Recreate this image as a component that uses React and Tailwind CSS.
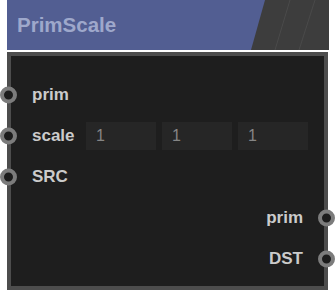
const Port = ({ side }) => (
  <span
    className={`absolute top-1/2 -translate-y-1/2 w-[17px] h-[17px] rounded-full bg-[#1c1c1c] border-[4px] border-[#7c7c7c] ${
      side === 'left' ? 'left-[-11px]' : 'right-[-11px]'
    }`}
  />
);

const Row = ({ children, side = 'left' }) => (
  <div className={`relative h-[41px] flex items-center ${side === 'right' ? 'justify-end pr-[21px]' : 'pl-[21px]'}`}>
    <Port side={side} />
    {children}
  </div>
);

const NumBox = ({ value }) => (
  <div className="w-[70px] h-[28px] bg-[#262626] flex items-center pl-[10px] text-[16px] font-normal text-[#858585]">
    {value}
  </div>
);

export default function App() {
  return (
    <div className="w-[336px] h-[294px] bg-white pl-[7px]" style={{ fontFamily: '"Liberation Sans", Arial, sans-serif' }}>
      <div className="relative w-[322px] h-[50px] bg-[#3d3d3d] overflow-hidden">
        <svg className="absolute inset-0" width="322" height="50" viewBox="0 0 322 50">
          <polygon points="0,0 258,0 244,50 0,50" fill="#525e92" />
          <line x1="268" y1="50" x2="283" y2="0" stroke="#4a4a4a" strokeWidth="1" />
          <line x1="292" y1="50" x2="308" y2="0" stroke="#4a4a4a" strokeWidth="1" />
        </svg>
        <div className="relative h-full flex items-center pl-[10px] text-[20.5px] font-bold text-[#9ea8cb]">
          PrimScale
        </div>
      </div>
      <div className="mt-[2px] w-[321px] h-[238px] border-[4px] border-[#4d4d4d] bg-[#1e1e1e] pt-[18px] text-[17px] font-bold text-[#cbcbcb]">
        <Row>prim</Row>
        <Row>
          <span className="w-[54px]">scale</span>
          <div className="flex gap-[6px]">
            <NumBox value="1" />
            <NumBox value="1" />
            <NumBox value="1" />
          </div>
        </Row>
        <Row>SRC</Row>
        <Row side="right">prim</Row>
        <Row side="right">DST</Row>
      </div>
    </div>
  );
}
